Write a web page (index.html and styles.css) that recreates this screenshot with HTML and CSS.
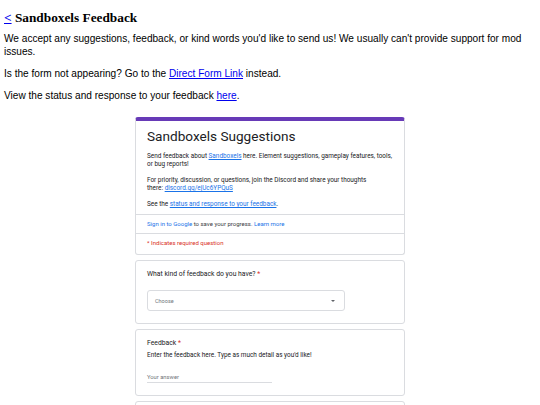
FILE: index.html
```html
<!DOCTYPE html>
<html>
<head>
<meta charset="utf-8">
<title>Sandboxels Feedback</title>
<link rel="stylesheet" href="styles.css">
</head>
<body>
<h1 class="page-title"><a href="#">&lt;</a> Sandboxels Feedback</h1>
<p class="para">We accept any suggestions, feedback, or kind words you'd like to send us! We usually can't provide support for mod issues.</p>
<p class="para">Is the form not appearing? Go to the <a href="#">Direct Form Link</a> instead.</p>
<p class="para">View the status and response to your feedback <a href="#">here</a>.</p>

<div class="embed">
  <div class="card card-head">
    <div class="head-main">
      <div class="form-title">Sandboxels Suggestions</div>
      <div class="form-desc">Send feedback about <a href="#" class="glink">Sandboxels</a> here. Element suggestions, gameplay features, tools,<br>or bug reports!<br><br>For priority, discussion, or questions, join the Discord and share your thoughts<br>there: <a href="#" class="glink">discord.gg/ejUc6YPQuS</a><br><br>See the <a href="#" class="glink">status and response to your feedback</a>.</div>
    </div>
    <div class="head-row signin"><span class="blue">Sign in to Google</span> to save your progress. <span class="blue">Learn more</span></div>
    <div class="head-row required">* Indicates required question</div>
  </div>

  <div class="card question">
    <div class="q-title">What kind of feedback do you have? <span class="star">*</span></div>
    <div class="select">
      <span class="select-text">Choose</span>
      <span class="caret"></span>
    </div>
  </div>

  <div class="card question">
    <div class="q-title">Feedback <span class="star">*</span></div>
    <div class="q-desc">Enter the feedback here. Type as much detail as you'd like!</div>
    <div class="answer">Your answer</div>
  </div>

  <div class="card question next"></div>
</div>
</body>
</html>
```

FILE: styles.css
```css
html, body {
  background: #ffffff;
}
body {
  margin: 0;
  padding: 4px;
  font-family: "Liberation Sans", Arial, sans-serif;
  color: #000000;
}
a {
  color: #0000ee;
}
.page-title {
  font-family: "Liberation Serif", "Times New Roman", serif;
  font-weight: bold;
  font-size: 13.3px;
  line-height: 15px;
  margin: 6px 0 7px;
}
.para {
  font-size: 10.1px;
  line-height: 13px;
  margin: 0 0 9px;
}
.embed {
  width: 270px;
  margin: 15px auto 0;
  display: flex;
  flex-direction: column;
  gap: 5px;
  font-family: Roboto, "Liberation Sans", sans-serif;
  color: #202124;
}
.card {
  box-sizing: border-box;
  width: 270px;
  border: 1px solid #dadce0;
  border-radius: 3px;
  background: #fff;
}
.card-head {
  border-top: 4px solid #673ab7;
}
.head-main {
  padding: 7px 11px 6px;
}
.form-title {
  font-size: 13.6px;
  line-height: 16px;
  color: #202124;
}
.form-desc {
  margin-top: 8px;
  font-size: 6.4px;
  line-height: 8px;
  color: #202124;
}
.glink {
  color: #1a73e8;
  text-decoration: underline;
}
.head-row {
  border-top: 1px solid #dadce0;
  padding: 5px 11px;
  font-size: 6px;
  line-height: 8px;
}
.signin {
  color: #3c4043;
}
.blue {
  color: #1a73e8;
}
.required {
  color: #d93025;
  padding-bottom: 7px;
}
.question {
  padding: 9px 11px 12px;
}
.next {
  height: 60px;
}
.q-title {
  font-size: 6.8px;
  line-height: 9px;
  color: #202124;
}
.star {
  color: #d93025;
}
.select {
  box-sizing: border-box;
  margin-top: 11px;
  width: 198px;
  height: 21px;
  border: 1px solid #dadce0;
  border-radius: 3px;
  display: flex;
  align-items: center;
  justify-content: space-between;
  padding: 0 9px 0 7px;
}
.select-text {
  font-size: 5.5px;
  color: #70757a;
}
.caret {
  width: 0;
  height: 0;
  border-left: 2.5px solid transparent;
  border-right: 2.5px solid transparent;
  border-top: 2.5px solid #5f6368;
}
.q-desc {
  margin-top: 3px;
  font-size: 6.4px;
  line-height: 8px;
  color: #202124;
}
.answer {
  margin-top: 14px;
  width: 125px;
  font-size: 5.8px;
  line-height: 8px;
  color: #70757a;
  padding-bottom: 1px;
  border-bottom: 1px solid #dadce0;
}
```
